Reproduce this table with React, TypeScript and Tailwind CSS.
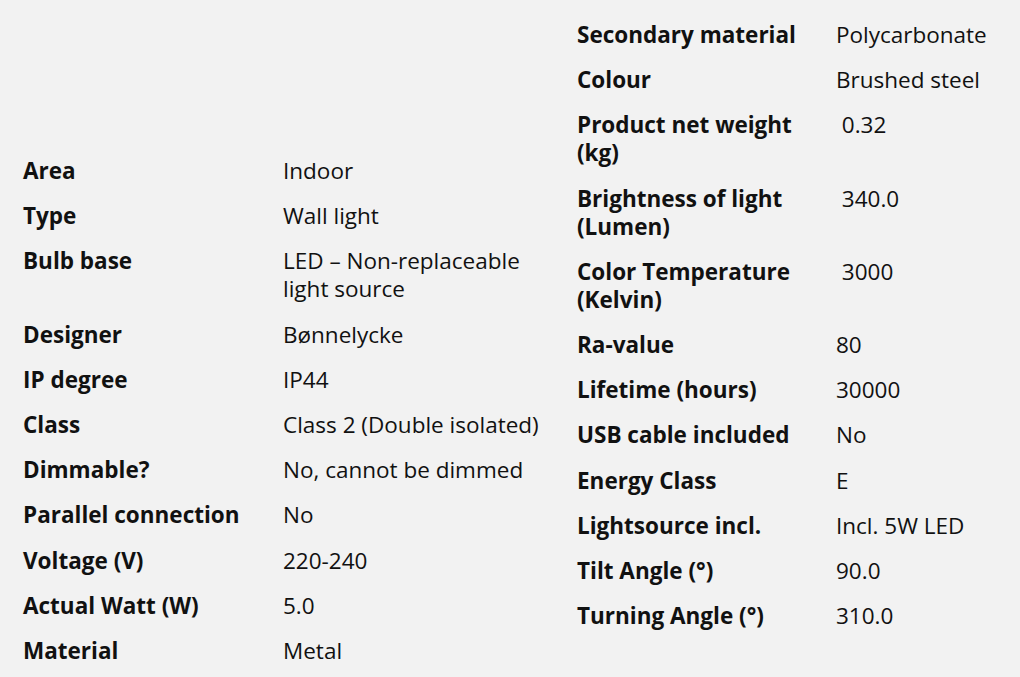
import React from 'react';

interface Spec {
  label: string;
  value: string;
}

const leftSpecs: Spec[] = [
  { label: 'Area', value: 'Indoor' },
  { label: 'Type', value: 'Wall light' },
  { label: 'Bulb base', value: 'LED – Non-replaceable light source' },
  { label: 'Designer', value: 'Bønnelycke' },
  { label: 'IP degree', value: 'IP44' },
  { label: 'Class', value: 'Class 2 (Double isolated)' },
  { label: 'Dimmable?', value: 'No, cannot be dimmed' },
  { label: 'Parallel connection', value: 'No' },
  { label: 'Voltage (V)', value: '220-240' },
  { label: 'Actual Watt (W)', value: '5.0' },
  { label: 'Material', value: 'Metal' },
];

const rightSpecs: Spec[] = [
  { label: 'Secondary material', value: 'Polycarbonate' },
  { label: 'Colour', value: 'Brushed steel' },
  { label: 'Product net weight (kg)', value: '\u00a00.32' },
  { label: 'Brightness of light (Lumen)', value: '\u00a0340.0' },
  { label: 'Color Temperature (Kelvin)', value: '\u00a03000' },
  { label: 'Ra-value', value: '80' },
  { label: 'Lifetime (hours)', value: '30000' },
  { label: 'USB cable included', value: 'No' },
  { label: 'Energy Class', value: 'E' },
  { label: 'Lightsource incl.', value: 'Incl. 5W LED' },
  { label: 'Tilt Angle (°)', value: '90.0' },
  { label: 'Turning Angle (°)', value: '310.0' },
];

const SpecTable: React.FC<{ specs: Spec[]; labelClass: string }> = ({ specs, labelClass }) => (
  <table className="w-[532px] table-fixed border-collapse">
    <tbody>
      {specs.map((spec, index) => (
        <tr key={index} className="align-top">
          <td className={`${labelClass} pr-5 pt-[8px] pb-[9.2px] font-bold`}>{spec.label}</td>
          <td className="pt-[8px] pb-[9.2px]">{spec.value}</td>
        </tr>
      ))}
    </tbody>
  </table>
);

const App: React.FC = () => {
  return (
    <div
      className="w-[1020px] h-[677px] overflow-hidden bg-[#f2f2f2] text-[#111111] text-[22.5px] leading-[28px] flex items-start gap-[22px] pl-[23px]"
      style={{ fontFamily: '"Open Sans", "Noto Sans", sans-serif' }}
    >
      <div className="mt-[149px]">
        <SpecTable specs={leftSpecs} labelClass="w-[260px]" />
      </div>
      <div className="mt-[13px]">
        <SpecTable specs={rightSpecs} labelClass="w-[259px]" />
      </div>
    </div>
  );
};

export default App;
